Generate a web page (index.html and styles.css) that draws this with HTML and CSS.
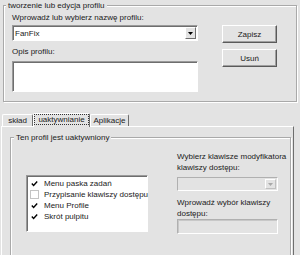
FILE: index.html
```html
<!DOCTYPE html>
<html lang="pl">
<head>
    <meta charset="UTF-8">
    <title>Profil</title>
    <link rel="stylesheet" href="styles.css">
</head>
<body>
    <fieldset class="group group-edit">
        <legend>tworzenie lub edycja profilu</legend>
        <div class="edit-body">
            <div class="edit-fields">
                <label class="caption">Wprowadź lub wybierz nazwę profilu:</label>
                <div class="combo">
                    <span class="combo-text">FanFix</span>
                    <span class="combo-btn"><svg width="5" height="3" viewBox="0 0 5 3"><path d="M0 0h5L2.5 3z" fill="#000"/></svg></span>
                </div>
                <label class="caption caption-desc">Opis profilu:</label>
                <div class="memo"></div>
            </div>
            <div class="edit-buttons">
                <button class="btn">Zapisz</button>
                <button class="btn">Usuń</button>
            </div>
        </div>
    </fieldset>

    <div class="tabs">
        <div class="tab tab-content">skład</div>
        <div class="tab tab-active"><span class="focus">uaktywnianie</span></div>
        <div class="tab tab-apps">Aplikacje</div>
    </div>
    <div class="tab-panel">
        <fieldset class="group group-activate">
            <legend>Ten profil jest uaktywniony</legend>
            <div class="activate-body">
                <ul class="checklist">
                    <li><span class="check checked"></span>Menu paska zadań</li>
                    <li><span class="check"></span>Przypisanie klawiszy dostępu</li>
                    <li><span class="check checked"></span>Menu Profile</li>
                    <li><span class="check checked"></span>Skrót pulpitu</li>
                </ul>
                <div class="hotkey">
                    <label class="caption">Wybierz klawisze modyfikatora klawiszy dostępu:</label>
                    <div class="combo combo-disabled">
                        <span class="combo-text"></span>
                        <span class="combo-btn"><svg width="5" height="3" viewBox="0 0 5 3"><path d="M0 0h5L2.5 3z" fill="#a8a8a8"/></svg></span>
                    </div>
                    <label class="caption caption-key">Wprowadź wybór klawiszy dostępu:</label>
                    <div class="field-disabled"></div>
                </div>
            </div>
        </fieldset>
    </div>
</body>
</html>
```

FILE: styles.css
```css
body {
    margin: 0;
    background-color: #e3e3e3;
    font-family: "Liberation Sans", Arial, sans-serif;
    font-size: 8px;
    color: #1a1a1a;
    width: 300px;
    height: 255px;
    overflow: hidden;
}
.group {
    border: 1px solid #a9a9a9;
    box-shadow: 1px 1px 0 #fff, inset 1px 1px 0 #fff;
    min-width: 0;
}
.group legend {
    padding: 0 2px;
    line-height: 11px;
    background-color: #e3e3e3;
}
.group-edit {
    margin: 0 0 0 3px;
    width: 294px;
    box-sizing: border-box;
    padding: 0 8px 9px 8px;
}
.group-edit legend {
    margin-left: -6px;
}
.edit-body {
    display: flex;
}
.edit-fields {
    width: 186px;
}
.caption {
    display: block;
    line-height: 10px;
}
.edit-fields .caption {
    margin-top: 2px;
    margin-bottom: 2px;
}
.edit-fields .caption-desc {
    margin-top: 6px;
    margin-bottom: 4px;
}
.combo {
    display: flex;
    height: 16px;
    box-sizing: border-box;
    background-color: #fff;
    border: 1px solid;
    border-color: #9a9a9a #fff #fff #9a9a9a;
    box-shadow: inset 1px 1px 0 #6e6e6e;
    padding: 1px 1px 1px 2px;
}
.combo-text {
    flex: 1;
    line-height: 13px;
}
.combo-btn {
    width: 11px;
    background-color: #e3e3e3;
    border: 1px solid;
    border-color: #fff #6e6e6e #6e6e6e #fff;
    box-sizing: border-box;
    display: flex;
    align-items: center;
    justify-content: center;
}
.memo {
    height: 31px;
    width: 186px;
    box-sizing: border-box;
    background-color: #fff;
    border: 1px solid;
    border-color: #9a9a9a #fff #fff #9a9a9a;
    box-shadow: inset 1px 1px 0 #6e6e6e;
}
.edit-buttons {
    margin-left: 24px;
    margin-top: 14px;
    display: flex;
    flex-direction: column;
    gap: 6px;
}
.btn {
    width: 55px;
    height: 18px;
    padding: 0;
    font: inherit;
    color: #1a1a1a;
    background-color: #e3e3e3;
    border: 1px solid;
    border-color: #fff #5a5a5a #5a5a5a #fff;
    box-shadow: inset -1px -1px 0 #a0a0a0;
}
.tabs {
    display: flex;
    align-items: flex-end;
    margin: 11px 0 0 2px;
    height: 13px;
    position: relative;
    z-index: 1;
}
.tab {
    height: 12px;
    box-sizing: border-box;
    text-align: center;
    line-height: 11px;
    border: 1px solid;
    border-bottom: none;
    border-color: #fff #6e6e6e #6e6e6e #fff;
    border-radius: 2px 2px 0 0;
}
.tab-content {
    width: 31px;
}
.tab-apps {
    width: 39px;
}
.tab-active {
    width: 57px;
    height: 14px;
    margin-bottom: -1px;
    padding: 1px 1px 0 1px;
    background-color: #e3e3e3;
}
.focus {
    display: block;
    outline: 1px dotted #333;
    line-height: 9px;
}
.tab-panel {
    margin-left: 1px;
    width: 293px;
    height: 130px;
    box-sizing: border-box;
    border: 1px solid;
    border-bottom: none;
    border-color: #fff #6e6e6e #6e6e6e #fff;
    padding: 0 2px 0 8px;
}
.group-activate {
    margin: 5px 0 0 0;
    padding: 0 0 0 15px;
    height: 124px;
    box-sizing: border-box;
    border-bottom: none;
}
.group-activate legend {
    margin-left: -12px;
}
.activate-body {
    display: flex;
    align-items: flex-start;
}
.checklist {
    list-style: none;
    margin: 32px 0 0 0;
    padding: 2px 0 0 3px;
    width: 122px;
    height: 57px;
    box-sizing: border-box;
    background-color: #fff;
    border: 1px solid;
    border-color: #9a9a9a #fff #fff #9a9a9a;
    box-shadow: inset 1px 1px 0 #6e6e6e;
}
.checklist li {
    display: flex;
    align-items: center;
    height: 11px;
    white-space: nowrap;
}
.check {
    width: 7px;
    height: 7px;
    margin-right: 5px;
    border: 1px solid #c4c4c4;
    background-color: #fff;
    flex: none;
}
.checked {
    border-color: #fff;
    background: no-repeat center/7px 7px url("data:image/svg+xml,%3Csvg xmlns='http://www.w3.org/2000/svg' viewBox='0 0 7 7'%3E%3Cpath d='M0.8 3.5l1.8 1.9l3.6-3.9' fill='none' stroke='%23000' stroke-width='1.4'/%3E%3C/svg%3E");
}
.hotkey {
    margin: 8px 0 0 29px;
    width: 112px;
}
.hotkey .caption {
    line-height: 11px;
}
.combo-disabled {
    width: 101px;
    margin: 4px 0 0;
    background-color: #e3e3e3;
    border-color: #b0b0b0 #fff #fff #b0b0b0;
    box-shadow: none;
    height: 14px;
}
.combo-disabled .combo-btn {
    border-color: #fff #c0c0c0 #c0c0c0 #fff;
}
.hotkey .caption-key {
    margin-top: 6px;
}
.field-disabled {
    width: 101px;
    height: 15px;
    box-sizing: border-box;
    border: 1px solid;
    border-color: #b0b0b0 #fff #fff #b0b0b0;
    box-shadow: inset 1px 1px 0 #c8c8c8;
}
```
